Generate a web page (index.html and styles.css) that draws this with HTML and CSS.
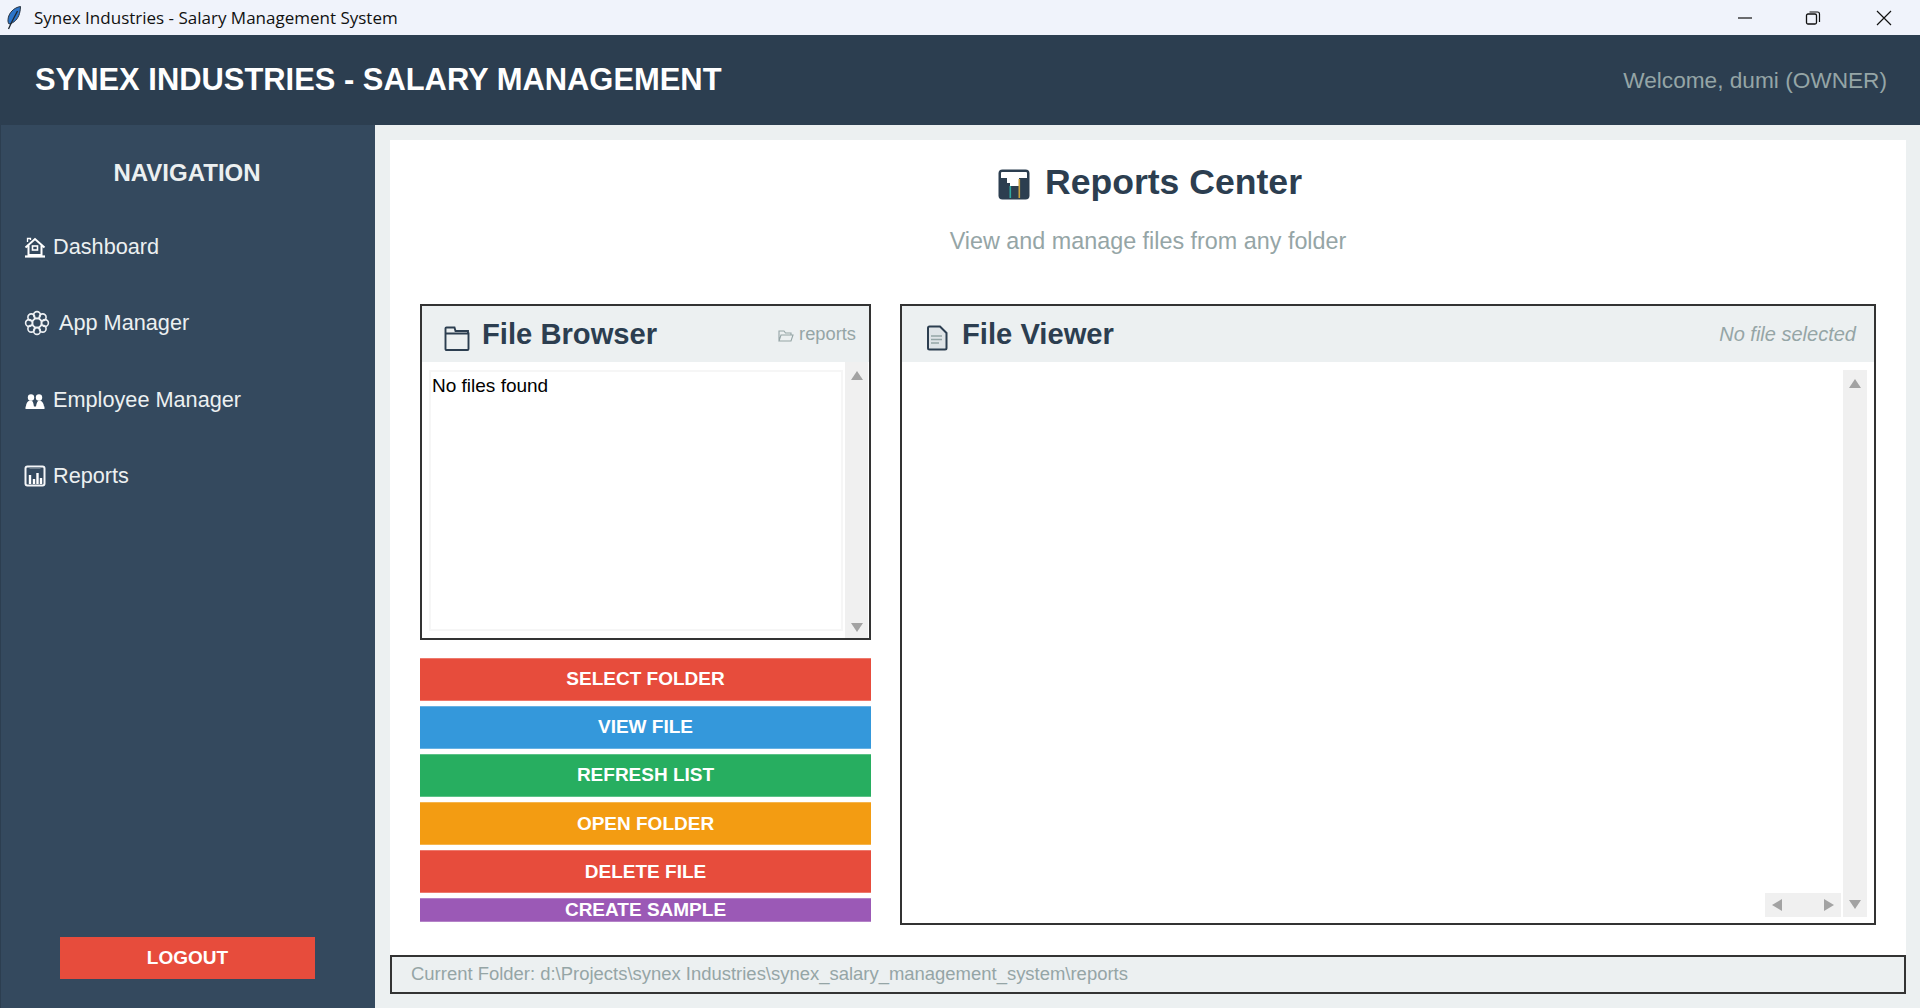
FILE: index.html
```html
<!DOCTYPE html>
<html lang="en">
<head>
<meta charset="utf-8">
<title>Synex Industries - Salary Management System</title>
<link rel="stylesheet" href="styles.css">
</head>
<body>
<div class="titlebar">
  <svg class="quill" viewBox="0 0 14 24"><path d="M13.500 .5C7 1.500 1.500 7 1 13.500c-.2 2 .3 3.500 1 4.500 5-1 9-5 10.500-10.500.7-2.500 1-5 1-7z" fill="#2b74c9" stroke="#2a3440" stroke-width="1"/><path d="M10.500 5C8 10 5 15 1.500 23" fill="none" stroke="#1f2730" stroke-width="1.300"/></svg>
  <span class="titlebar-text">Synex Industries - Salary Management System</span>
  <div class="winctl">
    <svg width="16" height="16" viewBox="0 0 16 16"><path d="M1 8h14" stroke="#111" stroke-width="1.200"/></svg>
    <svg width="16" height="16" viewBox="0 0 16 16"><rect x="1.500" y="4" width="10" height="10" rx="1.500" fill="none" stroke="#111" stroke-width="1.300"/><path d="M4.500 2h8a2 2 0 0 1 2 2v8" fill="none" stroke="#111" stroke-width="1.200"/></svg>
    <svg class="win-close" width="16" height="16" viewBox="0 0 16 16"><path d="M1 1l14 14M15 1L1 15" stroke="#111" stroke-width="1.200"/></svg>
  </div>
</div>
<header class="header">
  <h1 class="app-title">SYNEX INDUSTRIES - SALARY MANAGEMENT</h1>
  <span class="welcome">Welcome, dumi (OWNER)</span>
</header>
<div class="layout">
  <aside class="sidebar">
    <h2 class="nav-title">NAVIGATION</h2>
    <nav class="nav">
      <a class="nav-item"><svg class="nav-icon" viewBox="0 0 22 22"><path d="M1.500 11.500L11 3l9.500 8.500M4.500 9.500V19h13V9.500" fill="none" stroke="#fff" stroke-width="2"/><path d="M3.500 6V2.500h3v1.500" fill="none" stroke="#fff" stroke-width="1.300"/><rect x="8.500" y="10" width="5" height="4" fill="none" stroke="#fff" stroke-width="1.600"/><path d="M1 20.500h20" stroke="#fff" stroke-width="2.200"/></svg><span>Dashboard</span></a>
      <a class="nav-item"><svg class="nav-icon gear" viewBox="0 0 26 26"><g fill="none" stroke="#eef1f4" stroke-width="1.600"><circle cx="13" cy="13" r="4.500"/><circle cx="13" cy="5" r="3.400"/><circle cx="13" cy="21" r="3.400"/><circle cx="5" cy="13" r="3.400"/><circle cx="21" cy="13" r="3.400"/><circle cx="7.300" cy="7.300" r="3.400"/><circle cx="18.700" cy="7.300" r="3.400"/><circle cx="7.300" cy="18.700" r="3.400"/><circle cx="18.700" cy="18.700" r="3.400"/></g></svg><span>App Manager</span></a>
      <a class="nav-item"><svg class="nav-icon" viewBox="0 0 22 22"><g fill="#fff"><circle cx="7" cy="8.500" r="3.200"/><circle cx="15" cy="8.500" r="3.200"/><path d="M2 18c0-4 2-6.500 4.500-6.500S9.500 14 10 18zM12 18c.5-4 1.500-6.500 3.500-6.500S20 14 20 18z"/><rect x="1.500" y="17.500" width="19" height="2.500"/></g></svg><span>Employee Manager</span></a>
      <a class="nav-item"><svg class="nav-icon" viewBox="0 0 22 22"><rect x="1.500" y="1.500" width="19" height="19" rx="2" fill="none" stroke="#f4f6f8" stroke-width="2"/><path d="M5.500 3h11" stroke="#7d8b99" stroke-width="1.500"/><path d="M6 19V10M10 19v-5M13.500 19V8M17 19v-6" stroke="#fff" stroke-width="2.400"/></svg><span>Reports</span></a>
    </nav>
    <button class="logout">LOGOUT</button>
  </aside>
  <main class="main">
    <section class="card">
      <div class="page-head">
        <svg class="head-icon" viewBox="0 0 32 32"><rect x="0.500" y="0.500" width="31" height="30" rx="4" fill="#2c3e50"/><path d="M4 3h24a1 1 0 0 1 1 1v5h-8v8h-9v-3H9V9H3V4a1 1 0 0 1 1-1z" fill="#fff"/><rect x="11.500" y="17" width="1.600" height="12" fill="#2fa8a0"/><rect x="20.500" y="10" width="1.600" height="19" fill="#c9a23f"/></svg>
        <span class="page-title">Reports Center</span>
      </div>
      <p class="page-sub">View and manage files from any folder</p>
      <div class="panels">
        <div class="left-col">
          <div class="panel browser">
            <div class="panel-head browser-head">
              <svg class="panel-icon" viewBox="0 0 26 26"><path d="M1.500 24V3.500a1 1 0 0 1 1-1h8l1 3.500h12.500v2M1.500 8.500h23V24a1 1 0 0 1-1 1h-21a1 1 0 0 1-1-1z" fill="none" stroke="#2c3e50" stroke-width="1.900"/></svg>
              <span class="panel-title">File Browser</span>
              <span class="panel-note"><svg class="mini-folder" viewBox="0 0 16 16"><path d="M1 13V3h5l1.500 2H13v2M1 13l2-6h12l-2 6z" fill="none" stroke="#95a5a6" stroke-width="1.100"/></svg>reports</span>
            </div>
            <div class="browser-body">
              <div class="list"><span>No files found</span></div>
              <div class="vbar"><i class="arrow up"></i><i class="arrow down"></i></div>
            </div>
          </div>
          <div class="actions">
            <button class="btn red">SELECT FOLDER</button>
            <button class="btn blue">VIEW FILE</button>
            <button class="btn green">REFRESH LIST</button>
            <button class="btn orange">OPEN FOLDER</button>
            <button class="btn red">DELETE FILE</button>
            <button class="btn purple">CREATE SAMPLE</button>
          </div>
        </div>
        <div class="panel viewer">
          <div class="panel-head">
            <svg class="panel-icon doc" viewBox="0 0 22 26"><path d="M2 3a1.500 1.500 0 0 1 1.500-1.500H14L20.500 8v15a1.500 1.500 0 0 1-1.500 1.500H3.500A1.500 1.500 0 0 1 2 23z" fill="#dfe4e7" stroke="#2c3e50" stroke-width="2"/><path d="M5 11h11M5 14.500h11M5 18h8" stroke="#95a5a6" stroke-width="1.400"/></svg>
            <span class="panel-title">File Viewer</span>
            <span class="panel-note italic">No file selected</span>
          </div>
          <div class="viewer-body">
            <div class="hbar"><i class="arrow left"></i><i class="arrow right"></i></div>
            <div class="vbar viewer-vbar"><i class="arrow up"></i><i class="arrow down"></i></div>
          </div>
        </div>
      </div>
    </section>
    <div class="status">Current Folder: d:\Projects\synex Industries\synex_salary_management_system\reports</div>
  </main>
</div>
</body>
</html>
```
FILE: styles.css
```css
* { box-sizing: border-box; }
html, body { margin: 0; height: 1008px; overflow: hidden; }
body { font-family: "Liberation Sans", Arial, sans-serif; background: #ecf0f1; }

.titlebar { height: 35px; background: #f0f3fb; display: flex; align-items: center; padding-left: 7px; }
.quill { width: 14px; height: 24px; margin-right: 13px; flex: none; }
.titlebar-text { font: 17px "Open Sans", sans-serif; color: #111; white-space: nowrap; }
.winctl { margin-left: auto; display: flex; gap: 52px; padding-right: 28px; align-items: center; }
.win-close { margin-left: 3px; }

.header { height: 90px; background: #2c3e50; display: flex; align-items: center; justify-content: space-between; padding: 0 33px 0 35px; }
.app-title { margin: 0; font-size: 30.900px; font-weight: 700; color: #fff; white-space: nowrap; }
.welcome { font-size: 22.650px; line-height: 26px; margin-bottom: 1px; color: #95a5a6; }

.layout { display: flex; height: 883px; }
.sidebar { width: 375px; background: #34495e; border-left: 1px solid #2c3e50; display: flex; flex-direction: column; align-items: stretch; flex: none; }
.nav-title { margin: 34px 0 0; padding-right: 2px; font-size: 24px; font-weight: 700; color: #ecf0f1; text-align: center; line-height: 28px; }
.nav { display: flex; flex-direction: column; padding: 0 0 0 23px; margin-top: 21.500px; }
.nav-item { display: flex; align-items: center; height: 76.500px; color: #ecf0f1; font-size: 21.700px; gap: 7px; }
.nav-icon { width: 22px; height: 22px; flex: none; }
.gear { width: 26px; height: 26px; margin-right: 2px; }
.logout { margin: auto 0 29px 59px; width: 255px; height: 42px; border: 0; background: #e74c3c; color: #fff; font: 700 19px "Liberation Sans", sans-serif; }

.main { flex: 1; min-width: 0; padding: 15px 14px 14px 15px; display: flex; flex-direction: column; }
.card { height: 815px; background: #fff; padding: 0 30px; display: flex; flex-direction: column; }
.page-head { display: flex; justify-content: center; align-items: center; gap: 15px; height: 58px; margin-top: 13px; padding-left: 4px; }
.head-icon { width: 32px; height: 32px; flex: none; margin-top: 5px; }
.page-title { font-size: 35.600px; font-weight: 700; color: #2c3e50; }
.page-sub { margin: 15px 0 0; text-align: center; font-size: 23.350px; line-height: 30px; color: #95a5a6; }
.panels { display: flex; gap: 29px; margin-top: 47.500px; }

.left-col { width: 451px; flex: none; display: flex; flex-direction: column; gap: 18px; }
.panel { border: 2px solid #333; background: #fff; display: flex; flex-direction: column; }
.browser { height: 336px; }
.viewer { flex: 1; min-width: 0; height: 621px; }
.panel-head { height: 56px; background: #ecf0f1; display: flex; align-items: center; padding: 2px 18px 0 22px; flex: none; }
.browser-head { padding-right: 13px; }
.panel-icon { width: 26px; height: 26px; flex: none; margin: 6px 12px 0 0; }
.doc { width: 22px; margin-right: 14px; margin-left: 2px; }
.panel-title { font-size: 29.200px; font-weight: 700; color: #2c3e50; }
.panel-note { margin-left: auto; margin-bottom: 2px; font-size: 18.300px; color: #95a5a6; display: flex; align-items: center; gap: 5px; }
.mini-folder { width: 16px; height: 16px; margin-top: 4px; }
.italic { font-style: italic; font-size: 20px; margin-bottom: 0; }

.browser-body { flex: 1; display: flex; min-height: 0; }
.list { width: 414px; margin: 8px 0 7px 7px; border: 2px solid #f6f6f6; padding: 3px 0 0 1px; font-size: 19px; color: #000; flex: none; }
.vbar { width: 23px; margin-left: 2px; background: #f0f0f0; display: flex; flex-direction: column; justify-content: space-between; align-items: center; padding: 9px 0 6px; }
.viewer-body { flex: 1; display: flex; align-items: flex-end; justify-content: flex-end; padding: 8px 7px 6px 0; min-height: 0; }
.viewer-vbar { align-self: stretch; width: 24px; margin-left: 0; padding: 9px 0 8px; }
.hbar { width: 76px; height: 24px; margin-right: 2px; background: #f0f0f0; display: flex; align-items: center; justify-content: space-between; padding: 0 7px; }
.arrow { display: block; width: 0; height: 0; }
.up { border: 6px solid transparent; border-top: 0; border-bottom: 9px solid #a3a3a3; }
.down { border: 6px solid transparent; border-bottom: 0; border-top: 9px solid #a3a3a3; }
.left { border: 6px solid transparent; border-left: 0; border-right: 10px solid #a3a3a3; }
.right { border: 6px solid transparent; border-right: 0; border-left: 10px solid #a3a3a3; }

.actions { display: flex; flex-direction: column; gap: 5.200px; }
.btn { height: 43px; border: 0; border-top: 1px solid rgba(255,255,255,.25); border-bottom: 1px solid rgba(255,255,255,.25); color: #fff; font: 700 19px "Liberation Sans", sans-serif; padding: 0; }
.red { background: #e74c3c; }
.blue { background: #3498db; }
.green { background: #27ae60; }
.orange { background: #f39c12; }
.purple { background: #9b59b6; height: 24px; line-height: 20px; }

.status { height: 39px; border: 2px solid #333; background: #ecf0f1; color: #95a5a6; font-size: 18.470px; line-height: 20px; display: flex; align-items: center; padding: 0 0 1px 19px; }
```
